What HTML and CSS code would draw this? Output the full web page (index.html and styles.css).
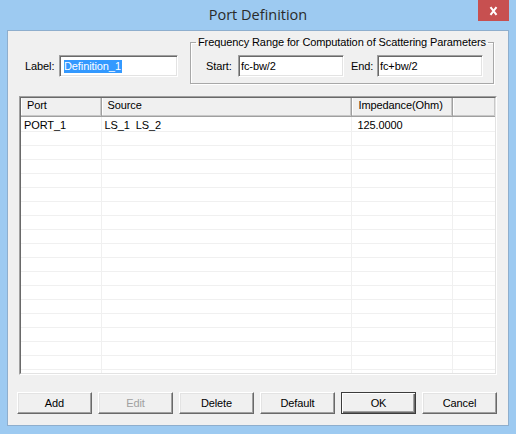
FILE: index.html
```html
<!DOCTYPE html>
<html lang="en">
<head>
<meta charset="utf-8">
<title>Port Definition</title>
<link rel="stylesheet" href="styles.css">
</head>
<body>
<div class="window">
  <div class="titlebar">
    <div class="title">Port Definition</div>
    <div class="close" aria-label="Close">
      <svg width="31" height="21" viewBox="0 0 31 21"><path d="M12.5 7.2 L18.5 14.8 M18.5 7.2 L12.5 14.8" stroke="#fff" stroke-width="2" fill="none"/></svg>
    </div>
  </div>
  <div class="client">
    <div class="top">
      <div class="label-field">
        <span class="lbl">Label:</span>
        <div class="edit edit-label"><span class="sel">Definition_1</span></div>
      </div>
      <fieldset class="group">
        <legend>Frequency Range for Computation of Scattering Parameters</legend>
        <div class="group-row">
          <span class="lbl lbl-start">Start:</span>
          <div class="edit edit-freq">fc-bw/2</div>
          <span class="lbl lbl-end">End:</span>
          <div class="edit edit-freq">fc+bw/2</div>
        </div>
      </fieldset>
    </div>
    <div class="grid">
      <div class="grid-inner">
        <table class="list">
          <colgroup><col class="c1"><col class="c2"><col class="c3"><col class="c4"></colgroup>
          <thead>
            <tr><th>Port</th><th>Source</th><th class="imp">Impedance(Ohm)</th><th></th></tr>
          </thead>
          <tbody>
            <tr><td>PORT_1</td><td>LS_1&nbsp;&nbsp;LS_2</td><td class="imp">125.0000</td><td></td></tr>
            <tr><td></td><td></td><td></td><td></td></tr>
            <tr><td></td><td></td><td></td><td></td></tr>
            <tr><td></td><td></td><td></td><td></td></tr>
            <tr><td></td><td></td><td></td><td></td></tr>
            <tr><td></td><td></td><td></td><td></td></tr>
            <tr><td></td><td></td><td></td><td></td></tr>
            <tr><td></td><td></td><td></td><td></td></tr>
            <tr><td></td><td></td><td></td><td></td></tr>
            <tr><td></td><td></td><td></td><td></td></tr>
            <tr><td></td><td></td><td></td><td></td></tr>
            <tr><td></td><td></td><td></td><td></td></tr>
            <tr><td></td><td></td><td></td><td></td></tr>
            <tr><td></td><td></td><td></td><td></td></tr>
            <tr><td></td><td></td><td></td><td></td></tr>
            <tr><td></td><td></td><td></td><td></td></tr>
            <tr><td></td><td></td><td></td><td></td></tr>
            <tr><td></td><td></td><td></td><td></td></tr>
            <tr><td></td><td></td><td></td><td></td></tr>
            <tr><td></td><td></td><td></td><td></td></tr>
          </tbody>
        </table>
      </div>
    </div>
    <div class="buttons">
      <button class="btn">Add</button>
      <button class="btn" disabled>Edit</button>
      <button class="btn">Delete</button>
      <button class="btn">Default</button>
      <button class="btn btn-default">OK</button>
      <button class="btn">Cancel</button>
    </div>
  </div>
</div>
</body>
</html>
```
FILE: styles.css
```css
* { box-sizing: border-box; }
html, body { margin: 0; padding: 0; }
body {
  width: 516px;
  height: 434px;
  overflow: hidden;
  font-family: "Liberation Sans", Arial, sans-serif;
  font-size: 11px;
  letter-spacing: -0.1px;
  color: #000;
}
.window {
  width: 516px;
  height: 434px;
  background: #9dcaf1;
  display: flex;
  flex-direction: column;
}
.titlebar {
  height: 30px;
  flex: none;
  display: grid;
  grid-template-columns: 1fr auto 1fr;
}
.title {
  grid-column: 2;
  font-family: "Open Sans", sans-serif;
  font-size: 14.5px;
  line-height: 30px;
  letter-spacing: 0;
  color: #2a2a2a;
}
.close {
  grid-column: 3;
  justify-self: end;
  align-self: start;
  margin-right: 7px;
  width: 31px;
  height: 21px;
  background: #c75050;
}
.close svg { display: block; }
.client {
  flex: 1;
  margin: 0 7px 8px;
  background: #f0f0f0;
  border: 1px solid #8eaecd;
  display: flex;
  flex-direction: column;
}
.top {
  height: 65px;
  flex: none;
  display: flex;
  align-items: flex-start;
}
.label-field {
  margin: 24px 0 0 17px;
  width: 153px;
  height: 22px;
  display: flex;
  align-items: center;
  justify-content: space-between;
}
.lbl { line-height: 13px; white-space: nowrap; }
.edit {
  height: 22px;
  background: #fff;
  border: 1px solid;
  border-color: #a0a0a0 #fff #fff #a0a0a0;
  box-shadow: inset 1px 1px #696969, inset -1px -1px #e3e3e3;
  display: flex;
  align-items: center;
  white-space: nowrap;
}
.edit-label { width: 119px; padding-left: 4px; }
.sel {
  background: #3399ff;
  color: #fff;
  line-height: 13px;
  padding-right: 1px;
}
.edit-freq { width: 106px; padding-left: 2px; }
.group {
  margin: 4px 0 0 12px;
  padding: 6px 0 6px 0;
  width: 304px;
  border: 1px solid #a8a8a8;
  box-shadow: 1px 1px #fff, inset 1px 1px #fff;
}
.group legend {
  margin-left: 5px;
  padding: 0 2px;
  line-height: 14px;
  white-space: nowrap;
}
.group-row {
  display: flex;
  align-items: center;
  padding-left: 15px;
}
.lbl-start { width: 32px; }
.lbl-end { width: 26px; margin-left: 7px; }
.grid {
  flex: none;
  margin: 0 11px;
  height: 279px;
  border: 1px solid;
  border-color: #a0a0a0 #fff #fff #a0a0a0;
}
.grid-inner {
  height: 100%;
  background: #fff;
  border: 1px solid;
  border-color: #696969 #e3e3e3 #e3e3e3 #696969;
  overflow: hidden;
}
.list {
  width: 474px;
  table-layout: fixed;
  border-collapse: collapse;
  border-spacing: 0;
}
.c1 { width: 80px; }
.c2 { width: 250px; }
.c3 { width: 101px; }
.c4 { width: 43px; }
.list th {
  height: 18px;
  padding: 0 0 2px 6px;
  font-weight: normal;
  text-align: left;
  background: #f0f0f0;
  border-right: 1px solid #a0a0a0;
  border-bottom: 1px solid #a0a0a0;
  box-shadow: inset -1px -1px #c8c8c8, inset 1px 0 #fff;
  line-height: 15px;
  white-space: nowrap;
  overflow: hidden;
}
.list th.imp { padding-left: 7px; }
.list td {
  height: 14px;
  padding: 2px 0 0 3px;
  line-height: 12px;
  border-right: 1px solid #f0f0f0;
  border-bottom: 1px solid #f0f0f0;
  white-space: nowrap;
  overflow: hidden;
}
.list td.imp { padding-left: 6px; }
.buttons {
  flex: none;
  display: flex;
  gap: 6px;
  margin: 17px 0 0 9px;
}
.btn {
  width: 75px;
  height: 22px;
  padding: 0;
  margin: 0;
  font: inherit;
  letter-spacing: inherit;
  color: #000;
  background: #f0f0f0;
  border: 1px solid;
  border-color: #fff #696969 #696969 #fff;
  box-shadow: inset -1px -1px #a0a0a0, inset 1px 1px #e3e3e3;
}
.btn:disabled { color: #a0a0a0; }
.btn-default {
  border: 1px solid #3c3c3c;
  box-shadow: inset 1px 1px #fff, inset -1px -1px #696969, inset -2px -2px #a0a0a0;
}
```
